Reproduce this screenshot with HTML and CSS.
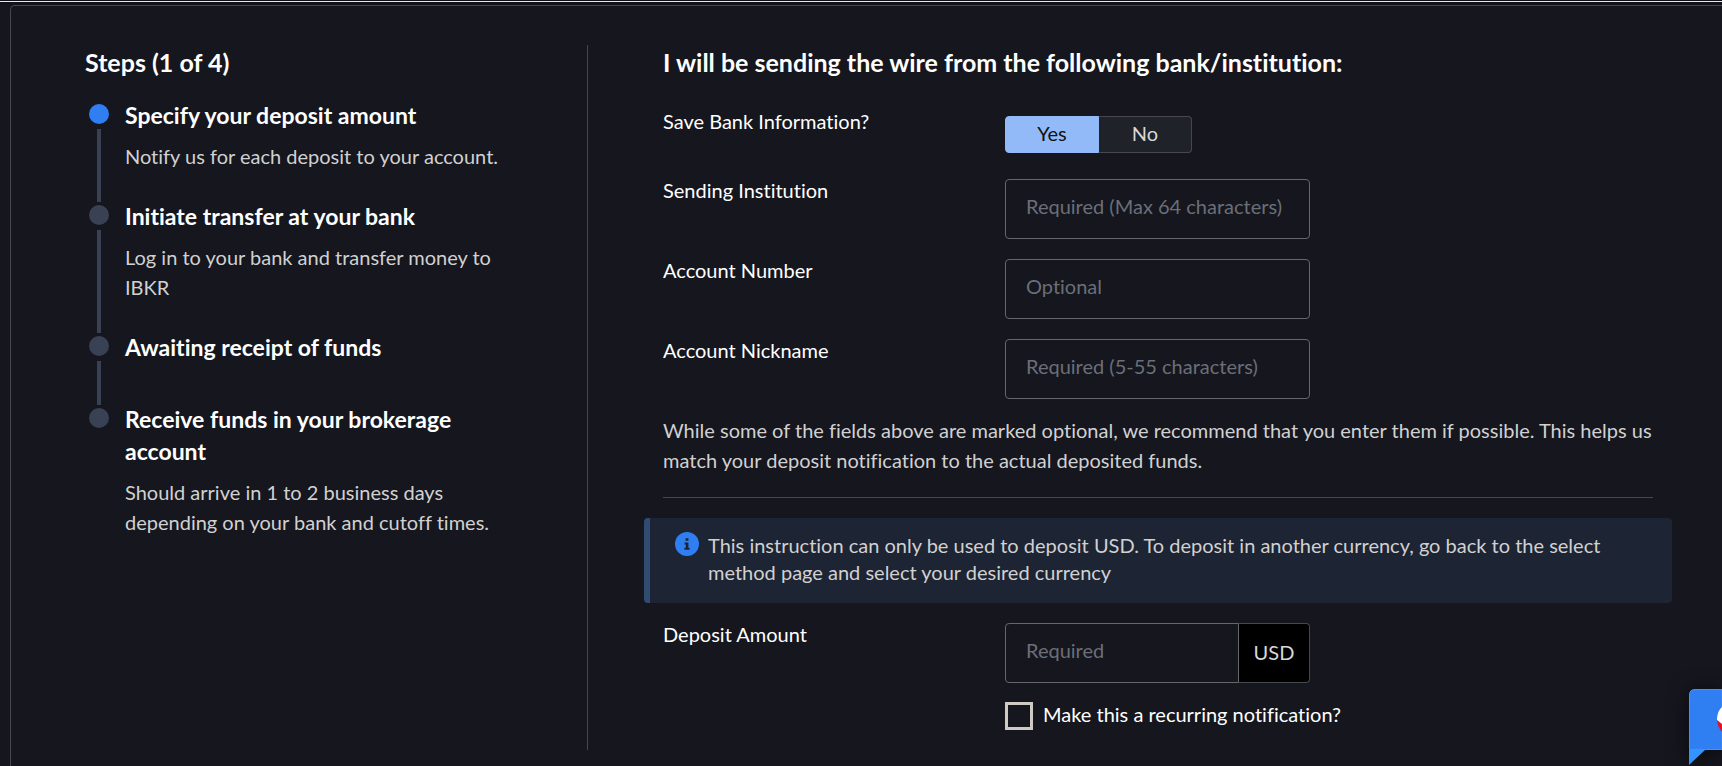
FILE: index.html
```html
<!DOCTYPE html>
<html lang="en">
<head>
<meta charset="utf-8">
<title>Deposit notification</title>
<link rel="stylesheet" href="styles.css">
</head>
<body>
<main class="panel">
  <aside class="steps">
    <h2 class="heading">Steps (1 of 4)</h2>
    <ol class="step-list">
      <li class="step">
        <div class="track"><span class="dot dot-active"></span><span class="line"></span></div>
        <div class="step-body">
          <h3 class="step-title">Specify your deposit amount</h3>
          <p class="step-text">Notify us for each deposit to your account.</p>
        </div>
      </li>
      <li class="step">
        <div class="track"><span class="dot"></span><span class="line"></span></div>
        <div class="step-body">
          <h3 class="step-title">Initiate transfer at your bank</h3>
          <p class="step-text">Log in to your bank and transfer money to IBKR</p>
        </div>
      </li>
      <li class="step">
        <div class="track"><span class="dot"></span><span class="line"></span></div>
        <div class="step-body">
          <h3 class="step-title">Awaiting receipt of funds</h3>
        </div>
      </li>
      <li class="step">
        <div class="track"><span class="dot"></span></div>
        <div class="step-body">
          <h3 class="step-title">Receive funds in your brokerage account</h3>
          <p class="step-text">Should arrive in 1 to 2 business days depending on your bank and cutoff times.</p>
        </div>
      </li>
    </ol>
  </aside>
  <form class="form">
    <h2 class="heading">I will be sending the wire from the following bank/institution:</h2>
    <div class="row row-toggle">
      <span class="label" id="save-label">Save Bank Information?</span>
      <div class="toggle" role="group" aria-labelledby="save-label">
        <button type="button" class="toggle-btn toggle-on" aria-pressed="true">Yes</button>
        <button type="button" class="toggle-btn" aria-pressed="false">No</button>
      </div>
    </div>
    <div class="row">
      <label class="label" for="institution">Sending Institution</label>
      <input class="field" id="institution" type="text" maxlength="64" placeholder="Required (Max 64 characters)">
    </div>
    <div class="row">
      <label class="label" for="number">Account Number</label>
      <input class="field" id="number" type="text" placeholder="Optional">
    </div>
    <div class="row">
      <label class="label" for="nickname">Account Nickname</label>
      <input class="field" id="nickname" type="text" maxlength="55" placeholder="Required (5-55 characters)">
    </div>
    <p class="note">While some of the fields above are marked optional, we recommend that you enter them if possible. This helps us match your deposit notification to the actual deposited funds.</p>
    <hr class="rule">
    <div class="alert">
      <svg class="alert-icon" viewBox="0 0 24 24" aria-hidden="true">
        <circle cx="12" cy="12" r="12" fill="#2f7ff3"/>
        <path d="M10.6 6.2h2.8v2.6h-2.8zM9.6 10.4h3.8v5.4h1.2v2H9.4v-2h1.4v-3.4H9.6z" fill="#1d2433"/>
      </svg>
      <p class="alert-text">This instruction can only be used to deposit USD. To deposit in another currency, go back to the select method page and select your desired currency</p>
    </div>
    <div class="row">
      <label class="label" for="amount">Deposit Amount</label>
      <div class="controls">
        <div class="amount">
          <input class="field field-amount" id="amount" type="text" placeholder="Required">
          <span class="unit">USD</span>
        </div>
        <label class="check"><input class="box" type="checkbox">Make this a recurring notification?</label>
      </div>
    </div>
  </form>
</main>
<button type="button" class="chat" aria-label="Open chat">
  <svg class="chat-art" viewBox="0 0 33 77" aria-hidden="true">
    <path d="M0 61h16L0 76z" fill="#3494ff"/>
    <path d="M33 .5H6Q.5.5.5 6v54.5H33z" fill="#2f7ff3" stroke="#4a8ff5"/>
    <path d="M33 18q-5 4-5 13 2 4 5 6z" fill="#fff"/>
    <path d="M28 31q0 6 5 12v-8z" fill="#e3132a"/>
  </svg>
</button>
</body>
</html>
```
FILE: styles.css
```css
* { box-sizing: border-box; }
html { height: 100%; }
body {
  position: relative;
  min-height: 100%;
  margin: 0;
  padding: 5px 0 0 10px;
  overflow: hidden;
  background: linear-gradient(#0f0f17 1px, #e9e9ef 1px, #e9e9ef 2px, #100f18 2px, #15161e 5px);
  background-color: #15161e;
  color: #fff;
  font: 20px/30px Lato, "Open Sans", sans-serif;
  font-variant-ligatures: none;
}
h2, h3, p, ol { margin: 0; padding: 0; }
button, input { font: inherit; }
.panel {
  display: flex;
  min-height: calc(100vh - 5px);
  padding: 39px 69px 16px 74px;
  border: 1px solid #46484c;
  border-width: 1px 0 0 1px;
  border-top-left-radius: 5px;
  background: #15161e;
}
.heading { font-size: 25px; line-height: 34px; font-weight: 700; }
.steps { width: 503px; flex-shrink: 0; padding-right: 84px; border-right: 1px solid #46484c; }
.step-list { margin-top: 20px; list-style: none; }
.step { display: flex; gap: 16px; min-height: 72px; }
.track { display: flex; flex-direction: column; align-items: center; width: 20px; margin-left: 4px; padding-top: 5px; flex-shrink: 0; }
.dot { width: 20px; height: 20px; border-radius: 50%; background: #394154; flex-shrink: 0; }
.dot-active { background: #2f7ff3; }
.line { width: 4px; flex: 1; margin: 5px 0 -2px; background: #394154; }
.step-body { padding-bottom: 29px; }
.step-title { margin-bottom: 10px; font-size: 23px; line-height: 32px; font-weight: 700; }
.step-text { color: #d1d1d1; }
.form { flex: 1; min-width: 0; padding-left: 75px; }
.row { display: grid; grid-template-columns: 342px 1fr; align-items: start; margin-bottom: 20px; }
.row:last-child { margin-bottom: 0; }
.row-toggle { margin-top: 27px; }
.label { margin-top: -4px; }
.row-toggle .label { margin-top: 0; }
.toggle { display: flex; width: 187px; height: 37px; margin: 10px 0 6px; }
.toggle-btn {
  flex: 1;
  padding: 0 0 4px;
  border: 1px solid #46484c;
  border-left: 0;
  border-radius: 0 4px 4px 0;
  background: #1f2329;
  color: #d8d8d8;
}
.toggle-on { border: 1px solid #92baf9; border-radius: 4px 0 0 4px; background: #92baf9; color: #111; }
.field {
  width: 305px;
  height: 60px;
  padding: 0 20px 6px;
  border: 1px solid #65676b;
  border-radius: 4px;
  background: transparent;
  color: #fff;
}
.field::placeholder { color: #6a6f78; opacity: 1; }
.note { margin-top: -4px; color: #d1d1d1; }
.rule { height: 1px; margin: 22px 0 20px; border: 0; background: #46484c; }
.alert {
  display: flex;
  gap: 9px;
  margin: 0 -19px 20px;
  padding: 14px 60px 17px 25px;
  border-left: 6px solid #314c73;
  border-radius: 4px;
  background: #1d2433;
}
.alert-icon { width: 24px; height: 24px; flex-shrink: 0; }
.alert-text { color: #d1d1d1; line-height: 27px; }
.amount { display: flex; width: 305px; }
.field-amount { flex: 1; width: auto; min-width: 0; border-radius: 4px 0 0 4px; }
.unit {
  display: grid;
  place-items: center;
  width: 71px;
  padding-bottom: 2px;
  border: 1px solid #46484c;
  border-left: 0;
  border-radius: 0 4px 4px 0;
  background: #000;
  color: #d8d8d8;
}
.check { display: flex; gap: 10px; margin-top: 19px; line-height: 24px; }
.box { appearance: none; width: 28px; height: 28px; margin: 0; border: 3px solid #cfcac2; }
.chat {
  position: absolute;
  right: 0;
  bottom: 0;
  width: 33px;
  height: 77px;
  padding: 0;
  border: 0;
  background: none;
  filter: drop-shadow(0 2px 10px #0a0a0e);
}
.chat-art { display: block; width: 33px; height: 77px; }
```
